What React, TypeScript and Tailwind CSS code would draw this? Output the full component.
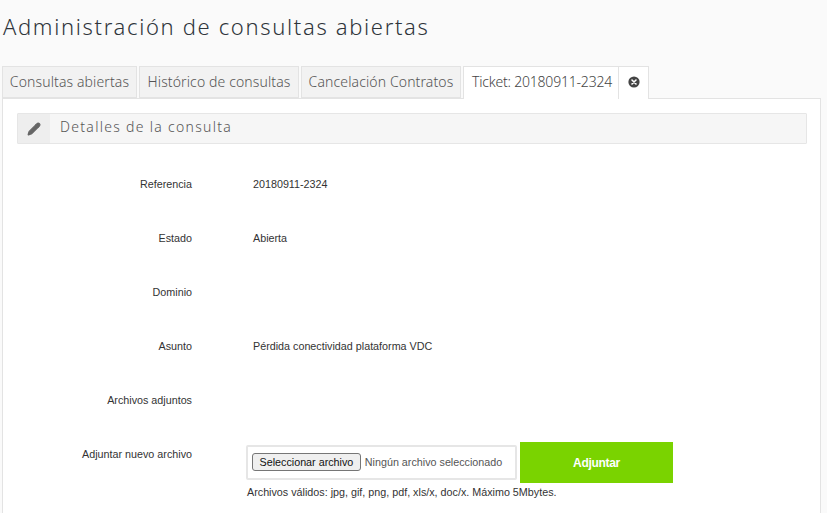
import { Pencil } from 'lucide-react'

const tabs = [
  { label: 'Consultas abiertas', width: 'w-[135px]' },
  { label: 'Histórico de consultas', width: 'w-[160px]' },
  { label: 'Cancelación Contratos', width: 'w-[160px]' },
]

const rows = [
  { label: 'Referencia', value: '20180911-2324' },
  { label: 'Estado', value: 'Abierta' },
  { label: 'Dominio', value: '' },
  { label: 'Asunto', value: 'Pérdida conectividad plataforma VDC' },
  { label: 'Archivos adjuntos', value: '' },
]

const headingFont = "font-['Noto_Sans',sans-serif]"

const App = () => {
  return (
    <div className="h-[513px] w-[827px] overflow-hidden bg-[#fafafa] font-['Liberation_Sans',Arial,sans-serif] text-[#333]">
      <h1 className={`${headingFont} px-[3px] pt-[10px] text-[22px] leading-[32px] font-light tracking-[1.66px] text-[#2f353b]`}>
        Administración de consultas abiertas
      </h1>

      <div className={`${headingFont} relative z-10 mt-[24px] flex h-[33px] pl-[2px] text-[14px] font-light text-[#555]`}>
        {tabs.map((tab) => (
          <div
            key={tab.label}
            className={`${tab.width} mr-[2px] flex h-[32px] items-center justify-center border border-[#e3e3e3] bg-[#f2f2f2] pb-[2px] tracking-[0.12px] whitespace-nowrap`}
          >
            {tab.label}
          </div>
        ))}
        <div className="flex h-[33px] w-[156px] items-center justify-center border border-b-0 border-[#e3e3e3] bg-white pb-[3px] pl-[2px] tracking-[-0.2px] whitespace-nowrap text-[#444]">
          Ticket: 20180911-2324
        </div>
        <div className="flex h-[33px] w-[30px] items-center justify-center border border-b-0 border-l-0 border-[#e3e3e3] bg-white pb-[2px]">
          <svg viewBox="0 0 12 12" className="h-[12px] w-[12px]">
            <circle cx="6" cy="6" r="5.6" fill="#444" />
            <path d="M4 4l4 4M8 4l-4 4" stroke="#fff" strokeWidth="1.6" strokeLinecap="round" />
          </svg>
        </div>
      </div>

      <div className="-mt-px ml-[2px] h-[416px] w-[819px] border border-[#e3e3e3] bg-white px-[14px] pt-[14px]">
        <div className={`${headingFont} flex h-[31px] w-[790px] items-center rounded-[1px] border border-[#e6e6e6] bg-[#f6f6f6] text-[14px] font-light tracking-[1.3px] text-[#555]`}>
          <div className="flex h-full w-[32px] items-center justify-center bg-[#eeeeee]">
            <Pencil size={14} fill="#666" stroke="#666" />
          </div>
          <span className="pb-[4px] pl-[10px]">Detalles de la consulta</span>
        </div>

        <div className="mt-[32px] text-[10.75px] leading-[16px] text-[#333]">
          {rows.map((row) => (
            <div key={row.label} className="flex h-[54px]">
              <div className="w-[175px] text-right">{row.label}</div>
              <div className="pl-[61px]">{row.value}</div>
            </div>
          ))}

          <div className="flex">
            <div className="w-[175px] text-right">Adjuntar nuevo archivo</div>
            <div className="-mt-[4px] pl-[54px]">
              <div className="flex items-center">
                <div className="flex h-[35px] w-[271px] items-center rounded-[2px] border-2 border-[#e6e6e6] bg-white pb-[1px] pl-[4px] text-[#555]">
                  <button
                    type="button"
                    className="h-[18px] rounded-[3px] border border-[#767676] bg-[#efefef] px-[6.5px] text-[#111]"
                  >
                    Seleccionar archivo
                  </button>
                  <span className="pl-[4px]">Ningún archivo seleccionado</span>
                </div>
                <button
                  type="button"
                  className="ml-[3px] h-[41px] w-[153px] bg-[#7ad300] text-[12px] font-bold tracking-[-0.3px] text-white"
                >
                  Adjuntar
                </button>
              </div>
              <p className="mt-[1px] ml-[1px] text-[#333]">Archivos válidos: jpg, gif, png, pdf, xls/x, doc/x. Máximo 5Mbytes.</p>
            </div>
          </div>
        </div>
      </div>
    </div>
  )
}

export default App
